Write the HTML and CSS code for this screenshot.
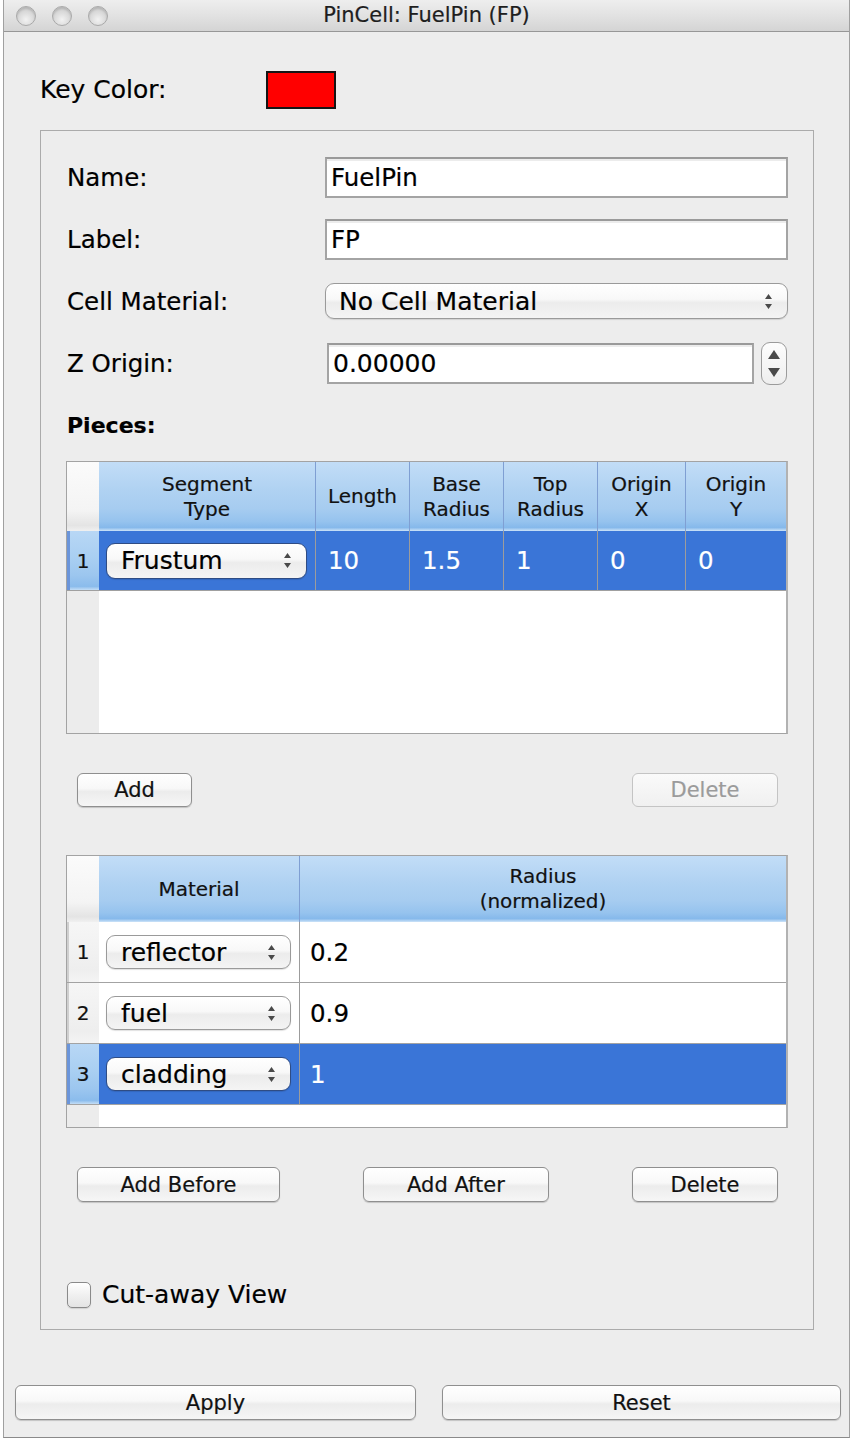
FILE: index.html
```html
<!DOCTYPE html>
<html>
<head>
<meta charset="utf-8">
<title>PinCell: FuelPin (FP)</title>
<link rel="stylesheet" href="styles.css">
</head>
<body>
<div class="window">
  <div class="titlebar">
    <div class="lights"><span class="light"></span><span class="light"></span><span class="light"></span></div>
    <div class="title">PinCell: FuelPin (FP)</div>
    <div></div>
  </div>
  <div class="keyrow">
    <span class="keylabel">Key Color:</span>
    <span class="swatch"></span>
  </div>
  <div class="group">
    <div class="frow"><span class="flabel">Name:</span><div class="input">FuelPin</div></div>
    <div class="frow"><span class="flabel">Label:</span><div class="input">FP</div></div>
    <div class="frow"><span class="flabel">Cell Material:</span>
      <div class="combo big"><span>No Cell Material</span><svg class="arr" width="9" height="17" viewBox="0 0 9 17"><path d="M4.5 1 L8 6 H1 Z M1 11 H8 L4.5 16 Z"/></svg></div>
    </div>
    <div class="frow"><span class="flabel zl">Z Origin:</span>
      <div class="input zin">0.00000</div>
      <div class="spin"><svg width="12" height="9" viewBox="0 0 12 9"><path d="M6 0 L12 9 H0 Z"/></svg><svg width="12" height="9" viewBox="0 0 12 9"><path d="M0 0 H12 L6 9 Z"/></svg></div>
    </div>
    <div class="frow"><span class="pieces">Pieces:</span></div>

    <div class="tbl t1">
      <div class="thead g1">
        <div class="corner"></div>
        <div class="hc">Segment<br>Type</div>
        <div class="hc">Length</div>
        <div class="hc">Base<br>Radius</div>
        <div class="hc">Top<br>Radius</div>
        <div class="hc">Origin<br>X</div>
        <div class="hc">Origin<br>Y</div>
      </div>
      <div class="trow g1 sel r58">
        <div class="rh selh">1</div>
        <div class="cc"><div class="combo cell selc"><span>Frustum</span><svg class="arr" width="9" height="17" viewBox="0 0 9 17"><path d="M4.5 1 L8 6 H1 Z M1 11 H8 L4.5 16 Z"/></svg></div></div>
        <div class="vc">10</div>
        <div class="vc">1.5</div>
        <div class="vc">1</div>
        <div class="vc">0</div>
        <div class="vc">0</div>
      </div>
      <div class="empty"><div class="eh"></div></div>
    </div>

    <div class="brow b1">
      <div class="btn w114">Add</div>
      <div class="btn w145 disabled">Delete</div>
    </div>

    <div class="tbl t2">
      <div class="thead g2 h66">
        <div class="corner"></div>
        <div class="hc">Material</div>
        <div class="hc">Radius<br>(normalized)</div>
      </div>
      <div class="trow g2 r60 line">
        <div class="rh normh">1</div>
        <div class="cc"><div class="combo cell2"><span>reflector</span><svg class="arr" width="9" height="17" viewBox="0 0 9 17"><path d="M4.5 1 L8 6 H1 Z M1 11 H8 L4.5 16 Z"/></svg></div></div>
        <div class="vc dark">0.2</div>
      </div>
      <div class="trow g2 r60 line">
        <div class="rh normh">2</div>
        <div class="cc"><div class="combo cell2"><span>fuel</span><svg class="arr" width="9" height="17" viewBox="0 0 9 17"><path d="M4.5 1 L8 6 H1 Z M1 11 H8 L4.5 16 Z"/></svg></div></div>
        <div class="vc dark">0.9</div>
      </div>
      <div class="trow g2 r60 line sel">
        <div class="rh selh">3</div>
        <div class="cc"><div class="combo cell2 selc"><span>cladding</span><svg class="arr" width="9" height="17" viewBox="0 0 9 17"><path d="M4.5 1 L8 6 H1 Z M1 11 H8 L4.5 16 Z"/></svg></div></div>
        <div class="vc">1</div>
      </div>
      <div class="empty"><div class="eh"></div></div>
    </div>

    <div class="brow b2">
      <div class="btn w202">Add Before</div>
      <div class="btn w185">Add After</div>
      <div class="btn w145">Delete</div>
    </div>

    <div class="check"><span class="box"></span><span class="clabel">Cut-away View</span></div>
  </div>
  <div class="bottom">
    <div class="btn big1">Apply</div>
    <div class="btn big2">Reset</div>
  </div>
</div>
</body>
</html>
```
FILE: styles.css
```css
html, body {
  margin: 0;
  padding: 0;
}
body {
  width: 854px;
  height: 1442px;
  overflow: hidden;
  background: #ffffff;
  font-family: "DejaVu Sans", "Noto Sans", sans-serif;
  color: #000;
  -webkit-text-stroke: 0.2px currentColor;
}
.window {
  margin-left: 3px;
  width: 847px;
  height: 1438px;
  box-sizing: border-box;
  background: #ededed;
  border-left: 1px solid #a0a0a0;
  border-right: 1px solid #a0a0a0;
  border-bottom: 1px solid #8a8a8a;
  display: flex;
  flex-direction: column;
}
.titlebar {
  height: 32px;
  box-sizing: border-box;
  border-bottom: 1px solid #979797;
  background: linear-gradient(#eeeeee, #e2e2e2 50%, #d4d4d4);
  display: grid;
  grid-template-columns: 1fr auto 1fr;
  align-items: center;
}
.lights {
  display: flex;
  gap: 16px;
  padding-left: 12px;
}
.light {
  width: 20px;
  height: 20px;
  box-sizing: border-box;
  border-radius: 50%;
  border: 1px solid #a9a9a9;
  background: radial-gradient(circle at 50% 70%, #f2f2f2 0%, #dcdcdc 45%, #c4c4c4 100%);
  box-shadow: inset 0 2px 2px rgba(0,0,0,0.12);
}
.title {
  font-size: 21px;
  color: #1e1e1e;
  line-height: 31px;
}
.keyrow {
  display: flex;
  align-items: center;
  height: 37px;
  margin-top: 39px;
  padding-left: 36px;
}
.keylabel {
  width: 226px;
  font-size: 25px;
}
.swatch {
  width: 70px;
  height: 38px;
  box-sizing: border-box;
  border: 2px solid #151515;
  background: #ff0000;
}
.group {
  margin-top: 22px;
  margin-left: 36px;
  width: 774px;
  height: 1200px;
  box-sizing: border-box;
  border: 1px solid #ababab;
  padding: 15px 25px 0 25px;
}
.frow {
  display: flex;
  align-items: center;
  height: 62px;
}
.flabel {
  width: 259px;
  flex: none;
  font-size: 24.5px;
  padding-left: 1px;
  box-sizing: border-box;
}
.flabel.zl {
  width: 261px;
}
.input {
  flex: 1;
  height: 41px;
  box-sizing: border-box;
  border: 2px solid #a4a4a4;
  border-top-color: #9a9a9a;
  background: #ffffff;
  box-shadow: inset 0 2px 0 #ececec;
  font-size: 24.5px;
  line-height: 37px;
  padding-left: 4px;
}
.input.zin {
  flex: none;
  width: 427px;
  font-size: 25px;
}
.spin {
  margin-left: 7px;
  width: 26px;
  height: 43px;
  box-sizing: border-box;
  border: 1px solid #9b9b9b;
  border-radius: 9px;
  background: linear-gradient(#fdfdfd, #eeeeee);
  display: flex;
  flex-direction: column;
  align-items: center;
  justify-content: center;
  gap: 9px;
}
.spin svg path {
  fill: #4a4a4a;
}
.pieces {
  font-size: 22px;
  font-weight: bold;
  padding-left: 1px;
}
.combo {
  display: flex;
  align-items: center;
  justify-content: space-between;
  box-sizing: border-box;
  border: 1px solid #9a9a9a;
  border-radius: 9px;
  background: linear-gradient(#ffffff, #f8f8f8 45%, #ececec 55%, #f4f4f4);
  box-shadow: 0 1px 1px rgba(0,0,0,0.12);
  color: #000;
}
.combo .arr path {
  fill: #4a4a4a;
}
.combo.big {
  flex: 1;
  height: 36px;
  font-size: 25px;
  padding: 0 14px 0 13px;
}
.tbl {
  margin-top: 5px;
  height: 273px;
  box-sizing: border-box;
  border: 1px solid #a3a3a3;
  border-right: 2px solid #b2b2b2;
  background: #ffffff;
  display: flex;
  flex-direction: column;
}
.t2 {
  margin-top: 48px;
}
.thead, .trow {
  display: grid;
  flex: none;
}
.g1 {
  grid-template-columns: 32px 216px 94px 94px 94px 88px 1fr;
}
.g2 {
  grid-template-columns: 32px 200px 1fr;
}
.thead {
  height: 69px;
}
.thead.h66 {
  height: 66px;
}
.corner {
  background: linear-gradient(#fbfbfb, #f4f4f4 70%, #e4e4e4 92%, #f0f0f0);
}
.hc {
  background: linear-gradient(#c2ddf7 0%, #b0d2f2 40%, #a6ccf0 68%, #96c3ee 86%, #86b9eb 95%, #cde3f8 100%);
  border-left: 1px solid #7f9fd3;
  display: flex;
  align-items: center;
  justify-content: center;
  text-align: center;
  font-size: 20px;
  line-height: 25px;
  color: #111;
}
.g1 .hc:nth-child(2), .g2 .hc:nth-child(2) {
  border-left: none;
}
.trow.r58 {
  height: 59px;
  border-bottom: 1px solid #a0a0a0;
}
.trow.r60 {
  height: 60px;
}
.trow.line {
  border-bottom: 1px solid #a3a3a3;
}
.trow.sel {
  background: #3a75d7;
}
.rh {
  display: flex;
  align-items: center;
  justify-content: center;
  font-size: 20px;
  color: #111;
}
.selh {
  background: linear-gradient(#b8d7f5 0%, #a9cff2 45%, #9cc6ef 75%, #8bbcec 94%, #c4def6 100%);
  box-shadow: inset 3px 0 0 #6b95da;
}
.normh {
  background: linear-gradient(#f6f6f6, #eeeeee 80%, #f4f4f4);
  box-shadow: inset 2px 0 0 #cfcfcf;
}
.cc {
  display: flex;
  align-items: center;
  padding-left: 7px;
  padding-right: 8px;
}
.combo.cell {
  flex: 1;
  height: 36px;
  font-size: 25px;
  padding: 0 14px 0 14px;
}
.combo.cell2 {
  flex: 1;
  height: 34px;
  font-size: 25px;
  padding: 0 14px 0 14px;
}
.combo.selc {
  border-color: #2f4c84;
}
.vc {
  border-left: 1px solid #9c9c9c;
  display: flex;
  align-items: center;
  padding-left: 12px;
  font-size: 24.5px;
  color: #ffffff;
}
.vc.dark {
  color: #000;
}
.g2 .vc {
  padding-left: 10px;
}
.empty {
  flex: 1;
  display: flex;
}
.eh {
  width: 32px;
  background: #ececec;
}
.brow {
  display: flex;
  justify-content: space-between;
  margin-top: 39px;
  padding: 0 10px 0 11px;
}
.b2 {
  margin-top: 39px;
}
.btn {
  height: 34px;
  box-sizing: border-box;
  border: 1px solid #8f8f8f;
  border-radius: 6px;
  background: linear-gradient(#ffffff, #f8f8f8 45%, #ececec 55%, #f6f6f6);
  box-shadow: 0 1px 1px rgba(0,0,0,0.18);
  display: flex;
  align-items: center;
  justify-content: center;
  font-size: 21px;
  color: #111;
}
.btn.disabled {
  border-color: #c4c4c4;
  color: #9b9b9b;
  background: linear-gradient(#fafafa, #f0f0f0);
  box-shadow: none;
}
.b2 .btn {
  height: 35px;
}
.w114 { width: 115px; }
.w145 { width: 146px; }
.w202 { width: 203px; }
.w185 { width: 186px; }
.check {
  display: flex;
  align-items: center;
  margin-top: 78px;
  padding-left: 1px;
}
.box {
  width: 24px;
  height: 26px;
  box-sizing: border-box;
  border: 1px solid #8a8a8a;
  border-radius: 5px;
  background: linear-gradient(#ffffff, #f0f0f0 50%, #e4e4e4);
  box-shadow: 0 1px 1px rgba(0,0,0,0.12);
}
.clabel {
  margin-left: 11px;
  font-size: 25px;
}
.bottom {
  display: flex;
  gap: 26px;
  margin-top: 55px;
  padding-left: 11px;
}
.big1 {
  width: 401px;
  height: 35px;
}
.big2 {
  width: 399px;
  height: 35px;
}
```
